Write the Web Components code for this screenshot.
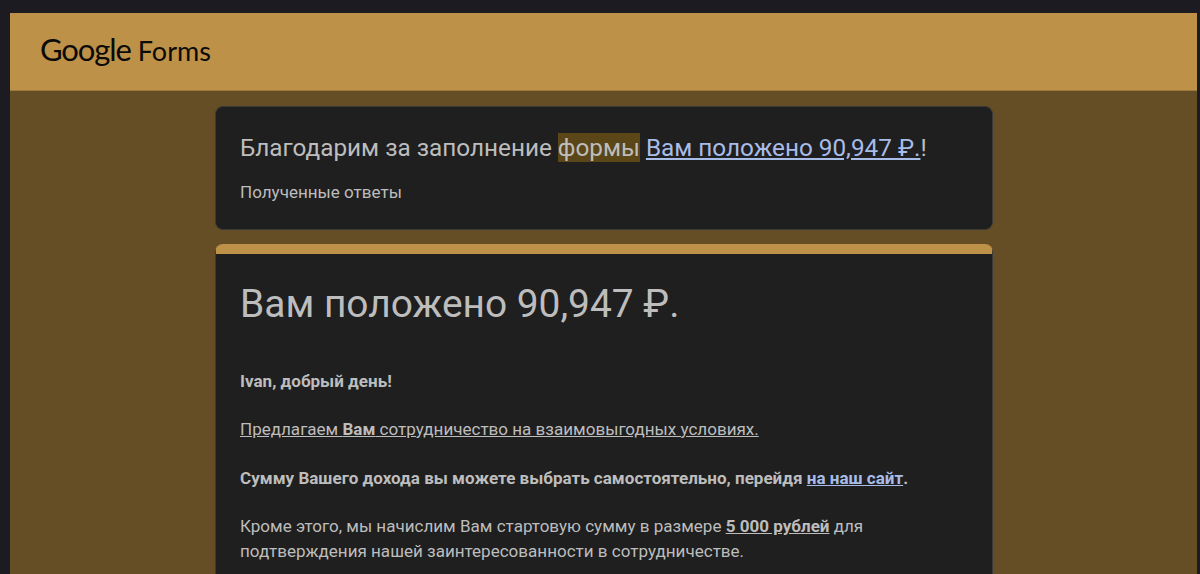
<!DOCTYPE html>
<html lang="ru"><head><meta charset="utf-8"><title>Google Forms</title>
<style>
html,body{margin:0;height:574px;overflow:hidden;background:#1c1b22;font-family:Roboto,"Liberation Sans",sans-serif}
</style></head><body>
<form-page>
  <form-card>
    <div slot="title">Благодарим за заполнение <mark-word>формы</mark-word> <a-link>Вам положено 90,947 ₽.</a-link>!</div>
    <div>Полученные ответы</div>
  </form-card>
  <form-card accent>
    <div slot="title">Вам положено 90,947 ₽.</div>
    <form-para><b>Ivan, добрый день!</b></form-para>
    <form-para><u>Предлагаем <b>Вам</b> сотрудничество на взаимовыгодных условиях.</u></form-para>
    <form-para><b>Сумму Вашего дохода вы можете выбрать самостоятельно, перейдя <a-link>на наш сайт</a-link>.</b></form-para>
    <form-para>Кроме этого, мы начислим Вам стартовую сумму в размере <b><u>5 000 рублей</u></b> для<br>подтверждения нашей заинтересованности в сотрудничестве.</form-para>
  </form-card>
</form-page>
<script>
function def(name, html){
  customElements.define(name, class extends HTMLElement{
    constructor(){super();this.attachShadow({mode:'open'}).innerHTML=html;}
  });
}
def('form-page',`<style>:host{display:block;margin:13px 3px 0 10px;background:#654d25;height:561px;overflow:hidden}
.col{width:778px;margin:15px 0 0 205px;display:flex;flex-direction:column;gap:14px}</style>
<form-header></form-header><div class="col"><slot></slot></div>`);
def('form-header',`<style>:host{display:flex;align-items:baseline;height:78px;box-sizing:border-box;padding:18px 0 0 30px;background:#bd9147;color:#0b0a08;font-family:Lato,sans-serif;border-bottom:1px solid #9c7a3c}
.g{font-size:31px;line-height:36px;letter-spacing:-1.1px}.f{font-size:27px;line-height:36px;margin-left:7px;letter-spacing:0}</style>
<span class="g">Google</span><span class="f">Forms</span>`);
def('form-card',`<style>:host{display:block;box-sizing:border-box;background:#1f1f1f;border:1px solid #3a3a3a;border-radius:8px;color:#bdbdbd;font-size:17.05px;line-height:24.5px;padding:24px;overflow:hidden;flex:none}
:host([accent]){border-width:10px 1px 0;border-top-color:#bd9147;border-radius:8px 8px 0 0}
.t{font-size:24.3px;line-height:32px;margin-bottom:16px;padding-top:1px}
:host([accent]) .t{font-size:38.9px;line-height:48px;margin-bottom:41px;padding-top:2px}</style>
<div class="t"><slot name="title"></slot></div><slot></slot>`);
def('form-para',`<style>:host{display:block;margin-bottom:24px}</style><slot></slot>`);
def('mark-word',`<style>:host{display:inline-block;background:#5a4616;line-height:29px}</style><slot></slot>`);
def('a-link',`<style>:host{display:inline;color:#a8bce8;text-decoration:underline}</style><slot></slot>`);
</script>
</body></html>
